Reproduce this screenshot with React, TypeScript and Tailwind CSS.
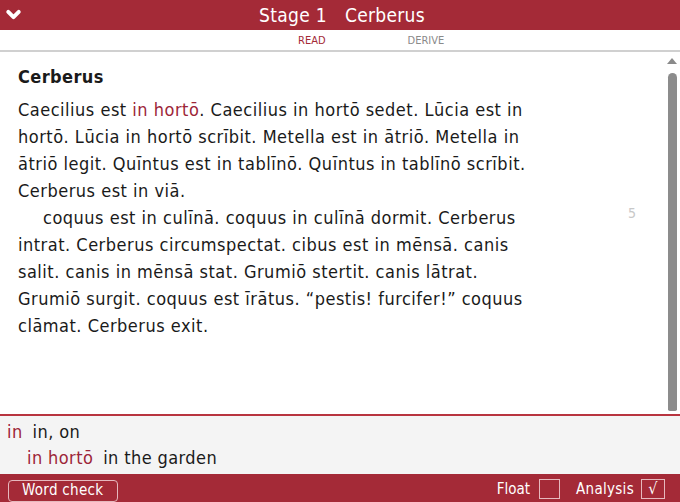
import { ChevronDown } from "lucide-react";

const para1 = [
  "hortō. Lūcia in hortō scrībit. Metella est in ātriō. Metella in",
  "ātriō legit. Quīntus est in tablīnō. Quīntus in tablīnō scrībit.",
  "Cerberus est in viā.",
];

const para2 = [
  "intrat. Cerberus circumspectat. cibus est in mēnsā. canis",
  "salit. canis in mēnsā stat. Grumiō stertit. canis lātrat.",
  "Grumiō surgit. coquus est īrātus. “pestis! furcifer!” coquus",
  "clāmat. Cerberus exit.",
];

export default function App() {
  return (
    <div className="w-[680px] h-[502px] flex flex-col bg-white text-[#1a1a1a] font-['DejaVu_Sans_Condensed','DejaVu_Sans',sans-serif] [font-stretch:condensed] overflow-hidden">
      {/* Title bar */}
      <div className="h-[30px] shrink-0 bg-[#a42a37] flex items-center relative">
        <ChevronDown className="absolute left-[3px] top-[4px] w-[21px] h-[21px] text-white" strokeWidth={4.5} />
        <div className="flex-1 text-center text-white text-[19px] leading-none pl-[4px] tracking-[0.3px]">
          Stage 1<span className="inline-block w-[18px]" />Cerberus
        </div>
      </div>

      {/* Tabs */}
      <div className="h-[22px] shrink-0 flex items-center pt-[3px] pl-[298px] gap-[82px] text-[11px] border-b-2 border-[#d0d0d0]">
        <span className="text-[#a42a37]">READ</span>
        <span className="text-[#8a8a8a]">DERIVE</span>
      </div>

      {/* Reading pane */}
      <div className="flex-1 flex min-h-0">
        <div className="flex-1 pl-[18px] pt-[13px]">
          <h1 className="text-[18px] font-bold leading-[24px] mb-[7px] tracking-[0.4px]">Cerberus</h1>
          <div className="relative text-[18px] leading-[27px] tracking-[0.5px] whitespace-nowrap">
            <div>
              Caecilius est <span className="text-[#9d2638]">in hortō</span>. Caecilius in hortō sedet. Lūcia est in
            </div>
            {para1.map((l) => (
              <div key={l}>{l}</div>
            ))}
            <div className="pl-[25px]">coquus est in culīnā. coquus in culīnā dormit. Cerberus</div>
            {para2.map((l) => (
              <div key={l}>{l}</div>
            ))}
            <span className="absolute left-[610px] top-[104px] text-[14px] tracking-normal text-[#c8c8c8]">5</span>
          </div>
        </div>
        {/* Scrollbar */}
        <div className="w-[14px] shrink-0 flex flex-col items-center pt-[6px] pb-[3px] pr-[2px]">
          <div className="w-0 h-0 border-l-[5px] border-r-[5px] border-b-[6px] border-l-transparent border-r-transparent border-b-[#8a8a8a]" />
          <div className="mt-[9px] flex-1 w-[9px] rounded-t-[5px] rounded-b-[2px] bg-[#8c8c8c]" />
        </div>
      </div>

      {/* Glossary */}
      <div className="h-[60px] shrink-0 border-t-2 border-[#b8343f] bg-[#f4f4f4] px-[7px] pt-[3px] text-[18px] leading-[26px] tracking-[0.4px]">
        <div>
          <span className="text-[#9d2638]">in</span>
          <span className="ml-[10px]">in, on</span>
        </div>
        <div className="pl-[20px]">
          <span className="text-[#9d2638]">in hortō</span>
          <span className="ml-[10px]">in the garden</span>
        </div>
      </div>

      {/* Footer */}
      <div className="h-[28px] shrink-0 bg-[#a42a37] flex items-center pl-[8px] pr-[15px] text-white text-[15px]">
        <button className="h-[22px] pl-[13px] pr-[14px] border border-[#e6b8bd] rounded-[4px] leading-none mt-[5px] tracking-[0.3px]">
          Word check
        </button>
        <div className="flex-1" />
        <label className="flex items-center gap-[9px] mt-[2px]">
          Float
          <span className="w-[21px] h-[20px] border border-[#e6b8bd]" />
        </label>
        <label className="flex items-center gap-[7px] ml-[16px] mt-[2px] tracking-[0.3px]">
          Analysis
          <span className="w-[24px] h-[20px] border border-[#e6b8bd] flex items-center justify-center text-[16px] leading-none">
            √
          </span>
        </label>
      </div>
    </div>
  );
}
